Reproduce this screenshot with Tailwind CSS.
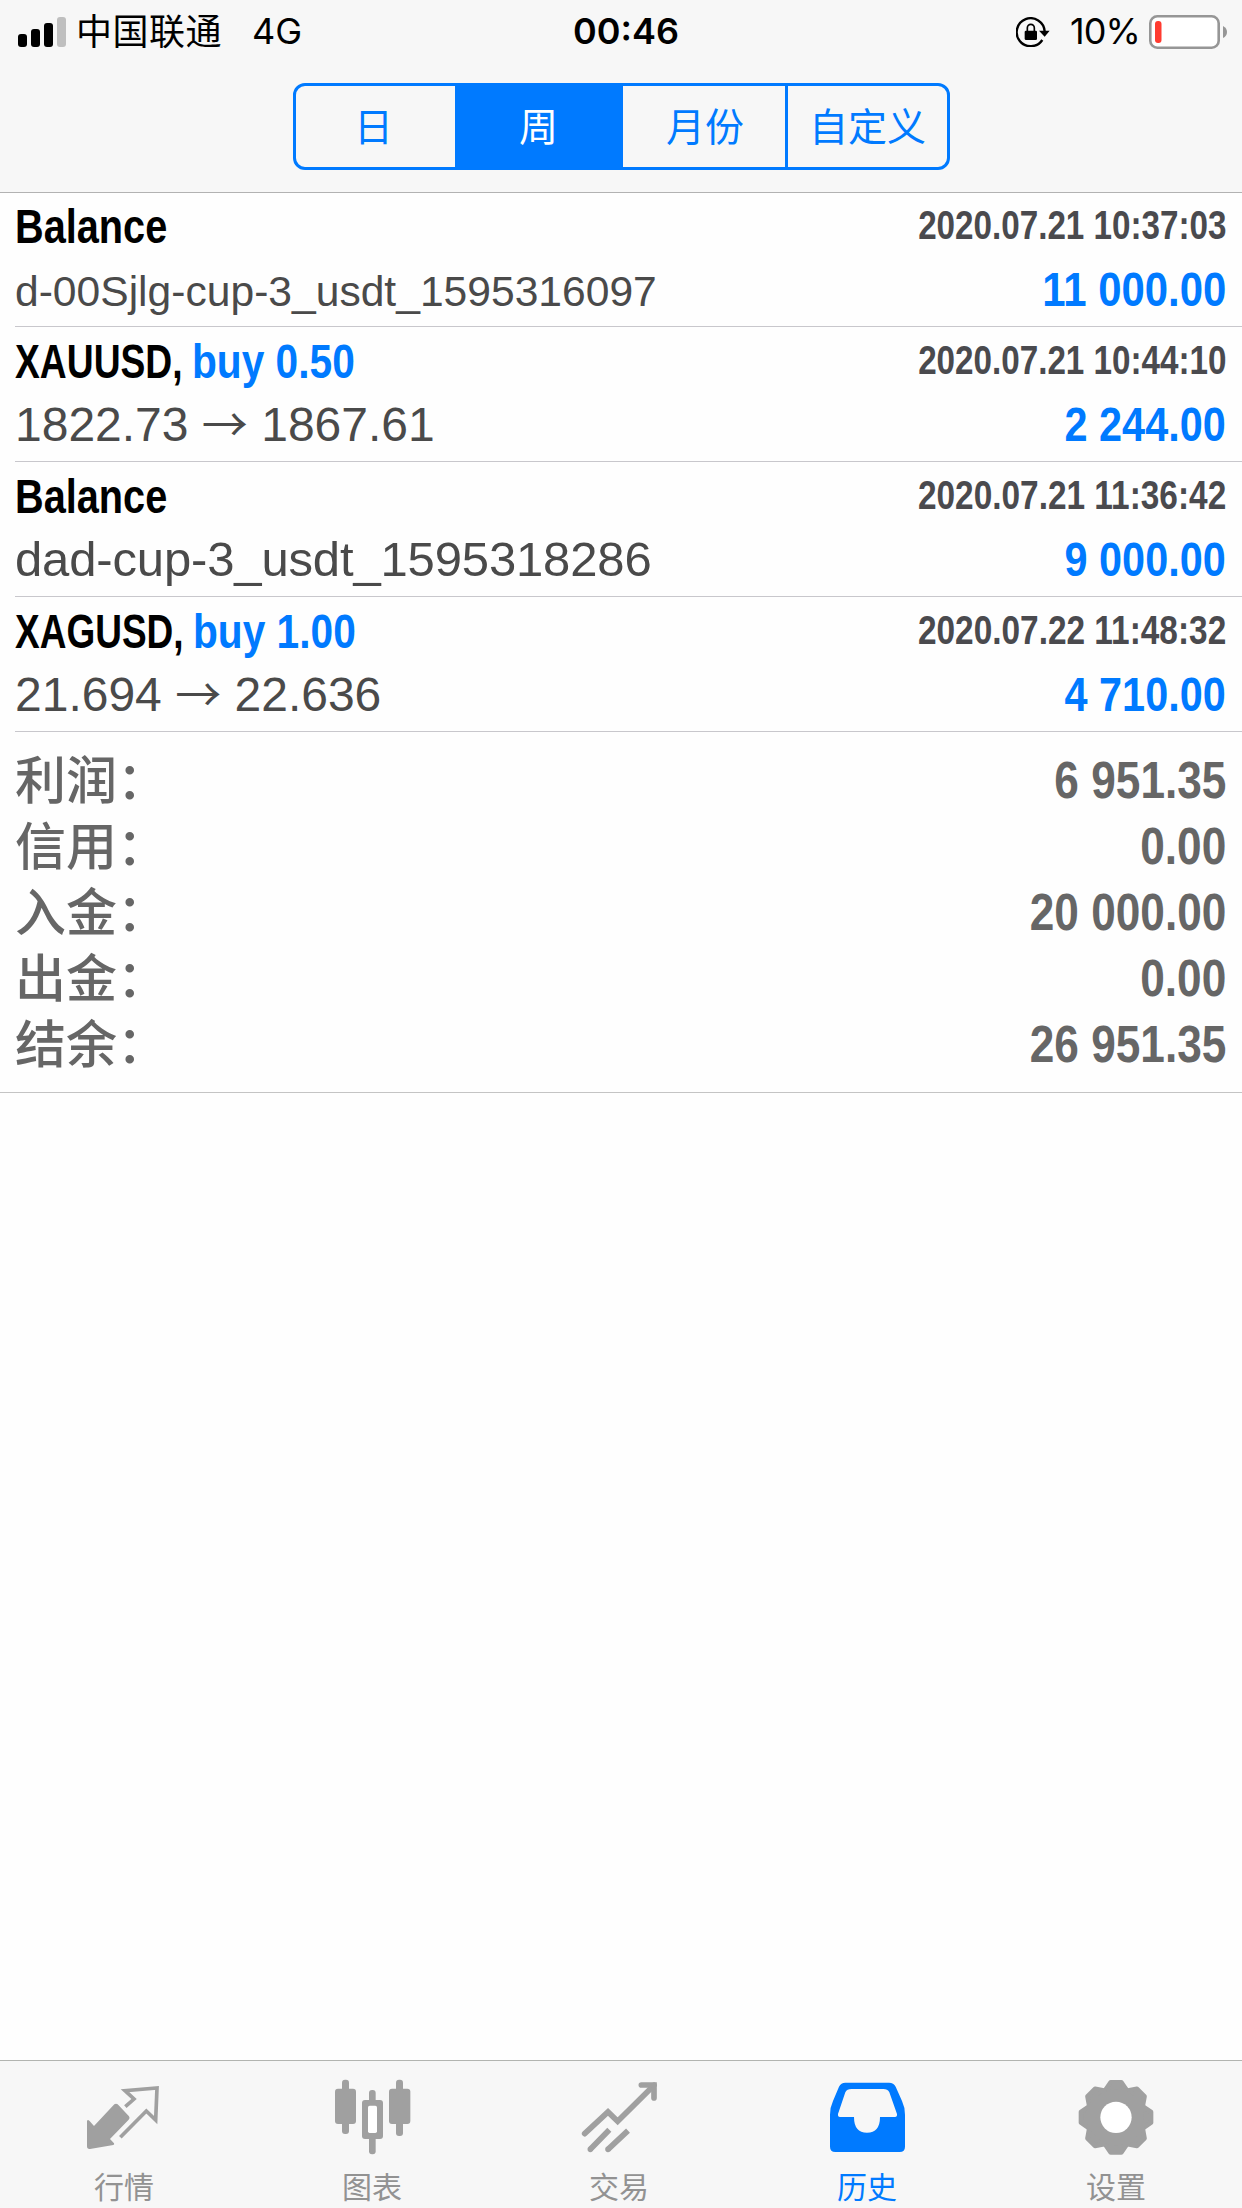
<!DOCTYPE html>
<html lang="zh-CN">
<head>
    <meta charset="UTF-8">
    <title>历史</title>
    <script src="https://cdn.jsdelivr.net/npm/@tailwindcss/browser@4"></script>
</head>
<body class="bg-[#fefefe] font-['Liberation_Sans','Noto_Sans_CJK_SC',sans-serif]">
    <div class="w-[1242px] h-[2208px] flex flex-col overflow-hidden">

        <!-- Header -->
        <header class="h-[193px] shrink-0 bg-[#f7f7f7] border-b border-[#b2b2b2]">
            <div class="h-[60px] grid grid-cols-3 items-center text-[36px] text-black whitespace-nowrap font-['Inter','Noto_Sans_CJK_SC',sans-serif]">
                <div class="flex items-center pl-[18px]">
                    <svg class="w-12 h-[30px]" viewBox="0 0 48 30">
                        <rect x="0" y="17" width="9" height="13" rx="3"/>
                        <rect x="13" y="12" width="9" height="18" rx="3"/>
                        <rect x="26" y="6" width="9" height="24" rx="3"/>
                        <rect x="39" y="0" width="9" height="30" rx="3" fill="#bfbfbf"/>
                    </svg>
                    <span class="ml-[10px] h-[60px] leading-[55px] tracking-[0.5px] font-['Noto_Sans_CJK_SC']">中国联通</span>
                    <span class="ml-[30px] h-[64px] leading-[62px]">4G</span>
                </div>
                <div class="text-center font-semibold h-[64px] leading-[62px] pl-[10px]">00:46</div>
                <div class="flex items-center justify-end pr-[15px]">
                    <svg class="w-[34px] h-[30px] mr-[20px]" viewBox="528 45 102 90">
                        <path d="M607 114 A42 42 0 1 1 614 88" fill="none" stroke="#000" stroke-width="7"/>
                        <path d="M597 86h32l-15 18z"/>
                        <rect x="554" y="86" width="37" height="28" rx="4"/>
                        <path d="M562 88v-10a10.500 11 0 0 1 21 0v10" fill="none" stroke="#000" stroke-width="5"/>
                    </svg>
                    <span class="h-[64px] leading-[62px] tracking-[-0.9px]">10%</span>
                    <svg class="w-[78px] h-[34px] ml-[9px]" viewBox="0 0 78 34">
                        <rect x="1.300" y="1.300" width="68.400" height="31.400" rx="7" fill="#fff" stroke="#969696" stroke-width="2.600"/>
                        <rect x="6" y="6" width="6.500" height="22" rx="3" fill="#ff3b30"/>
                        <path d="M74 11q4 2 4 6t-4 6z" fill="#969696"/>
                    </svg>
                </div>
            </div>

            <div class="mt-[23px] mx-auto w-[657px] h-[87px] flex border-3 border-[#007aff] rounded-xl text-[39px] leading-[76px] text-center text-[#007aff] font-['Noto_Sans_CJK_SC']">
                <div class="w-[159px] pr-[3px]">日</div>
                <div class="w-[168px] bg-[#007aff] text-white">周</div>
                <div class="w-[162px] pl-[3px]">月份</div>
                <div class="flex-1 border-l-3 border-[#007aff] pl-px">自定义</div>
            </div>
        </header>

        <!-- History list -->
        <ul class="-mt-px pl-[15px] text-[49px] whitespace-nowrap">
            <li class="h-[135px] pr-[16px] flex justify-between border-b border-[#c8c7cc]">
                <div>
                    <div class="h-[68px] leading-[68px] font-bold text-black"><span class="inline-block origin-left scale-x-[0.81]">Balance</span></div>
                    <div class="text-[42.6px] leading-[62px] text-[#4a4a4a]">d-00Sjlg-cup-3_usdt_1595316097</div>
                </div>
                <div class="flex flex-col items-end font-bold">
                    <div class="text-[40px] leading-[66px] text-[#4a4a4e] origin-right scale-x-[0.83]">2020.07.21 10:37:03</div>
                    <div class="leading-[62px] text-[#007aff] origin-right scale-x-[0.855]">11 000.00</div>
                </div>
            </li>
            <li class="h-[135px] pr-[16px] flex justify-between border-b border-[#c8c7cc]">
                <div>
                    <div class="h-[68px] leading-[68px] font-bold text-black flex">
                        <span class="w-[177px] origin-left scale-x-[0.76]">XAUUSD,</span>
                        <span class="origin-left scale-x-[0.83] text-[#007aff]">buy 0.50</span>
                    </div>
                    <div class="text-[48px] leading-[60px] text-[#4a4a4a]">1822.73 <span class="text-[46px] leading-none font-['Noto_Sans_CJK_SC']">→</span> 1867.61</div>
                </div>
                <div class="flex flex-col items-end font-bold">
                    <div class="text-[40px] leading-[66px] text-[#4a4a4e] origin-right scale-x-[0.83]">2020.07.21 10:44:10</div>
                    <div class="leading-[62px] text-[#007aff] origin-right scale-x-[0.845]">2 244.00</div>
                </div>
            </li>
            <li class="h-[135px] pr-[16px] flex justify-between border-b border-[#c8c7cc]">
                <div>
                    <div class="h-[68px] leading-[68px] font-bold text-black"><span class="inline-block origin-left scale-x-[0.81]">Balance</span></div>
                    <div class="leading-[58px] text-[#4a4a4a] tracking-[-0.15px]">dad-cup-3_usdt_1595318286</div>
                </div>
                <div class="flex flex-col items-end font-bold">
                    <div class="text-[40px] leading-[66px] text-[#4a4a4e] origin-right scale-x-[0.835]">2020.07.21 11:36:42</div>
                    <div class="leading-[62px] text-[#007aff] origin-right scale-x-[0.845]">9 000.00</div>
                </div>
            </li>
            <li class="h-[135px] pr-[16px] flex justify-between border-b border-[#c8c7cc]">
                <div>
                    <div class="h-[68px] leading-[68px] font-bold text-black flex">
                        <span class="w-[178px] origin-left scale-x-[0.755]">XAGUSD,</span>
                        <span class="origin-left scale-x-[0.83] text-[#007aff]">buy 1.00</span>
                    </div>
                    <div class="text-[48px] leading-[60px] text-[#4a4a4a]">21.694 <span class="text-[46px] leading-none font-['Noto_Sans_CJK_SC']">→</span> 22.636</div>
                </div>
                <div class="flex flex-col items-end font-bold">
                    <div class="text-[40px] leading-[66px] text-[#4a4a4e] origin-right scale-x-[0.835]">2020.07.22 11:48:32</div>
                    <div class="leading-[62px] text-[#007aff] origin-right scale-x-[0.845]">4 710.00</div>
                </div>
            </li>
        </ul>

        <!-- Totals -->
        <div class="pl-[15px] pr-[16px] py-[15px] border-b border-[#c4c4c4] text-[52px] leading-[66px] text-[#666666]">
            <div class="h-[66px] flex justify-between">
                <span class="font-medium text-[51px] leading-[61px] font-['Noto_Sans_CJK_SC']">利润：</span>
                <span class="font-bold origin-right scale-x-[0.85]">6 951.35</span>
            </div>
            <div class="h-[66px] flex justify-between">
                <span class="font-medium text-[51px] leading-[61px] font-['Noto_Sans_CJK_SC']">信用：</span>
                <span class="font-bold origin-right scale-x-[0.85]">0.00</span>
            </div>
            <div class="h-[66px] flex justify-between">
                <span class="font-medium text-[51px] leading-[61px] font-['Noto_Sans_CJK_SC']">入金：</span>
                <span class="font-bold origin-right scale-x-[0.85]">20 000.00</span>
            </div>
            <div class="h-[66px] flex justify-between">
                <span class="font-medium text-[51px] leading-[61px] font-['Noto_Sans_CJK_SC']">出金：</span>
                <span class="font-bold origin-right scale-x-[0.85]">0.00</span>
            </div>
            <div class="h-[66px] flex justify-between">
                <span class="font-medium text-[51px] leading-[61px] font-['Noto_Sans_CJK_SC']">结余：</span>
                <span class="font-bold origin-right scale-x-[0.85]">26 951.35</span>
            </div>
        </div>

        <!-- Tab bar -->
        <nav class="mt-auto h-[148px] shrink-0 grid grid-cols-[repeat(5,248px)] bg-[#f7f7f7] border-t border-[#b2b4b0] text-[30px] leading-[60px] text-[#929292] font-['Noto_Sans_CJK_SC']">
            <a class="flex flex-col items-center pt-[15px]">
                <svg class="size-20 shrink-0" viewBox="132 108 240 240" fill="#a0a0a0">
                    <path d="M223 193q5-4 10 0l34 36q4 5-1 10l-56 58 12 13q2 4-2 5l-70 12q-9 1-9-8v-76q2-6 7-1l14 16z"/>
                    <path d="M256 200l26-23-27-25 96-8-4 96-28-27-78 79" fill="none" stroke="#a0a0a0" stroke-width="11"/>
                </svg>
                <span class="-mt-px">行情</span>
            </a>
            <a class="flex flex-col items-center pt-[15px]">
                <svg class="size-20 shrink-0" viewBox="876 108 240 240" fill="#a0a0a0">
                    <rect x="906" y="119" width="21" height="163" rx="9"/>
                    <rect x="885" y="146" width="63" height="106" rx="9"/>
                    <rect x="1068" y="119" width="21" height="169" rx="9"/>
                    <rect x="1047" y="146" width="64" height="106" rx="9"/>
                    <rect x="987" y="150" width="20" height="193" rx="9"/>
                    <rect x="966" y="180" width="63" height="117" rx="9"/>
                    <rect x="984" y="197" width="27" height="82" rx="5" fill="#fff"/>
                </svg>
                <span class="-mt-px">图表</span>
            </a>
            <a class="flex flex-col items-center pt-[15px]">
                <svg class="size-20 shrink-0" viewBox="120 108 240 240" fill="none" stroke="#a0a0a0">
                    <path d="M134 281l70-65 29 28L342 136" stroke-width="17" stroke-linecap="round"/>
                    <path d="M304 135h38v39" stroke-width="17" stroke-linecap="round"/>
                    <path d="M208 269l-57 59M264 272l-60 56" stroke-width="17"/>
                    <path d="M151 328h0M204 328h0" stroke-width="17" stroke-linecap="round"/>
                </svg>
                <span class="-mt-px -ml-0.5">交易</span>
            </a>
            <a class="flex flex-col items-center pt-[15px] text-[#007aff]">
                <svg class="size-20 shrink-0" viewBox="864 108 240 240" fill="#007aff" fill-rule="evenodd">
                    <path d="M916 128h131q14 0 20 12l19 43q9 19 9 41v96q0 16-16 16H886q-16 0-16-16v-96q0-22 9-41l18-43q6-12 19-12zM934 147q-13 0-18 10l-22 65q-1 9 6 9h42q0 47 39 47t39-47h45q7 0 6-9l-23-65q-5-10-18-10z"/>
                </svg>
                <span class="-mt-px -ml-0.5">历史</span>
            </a>
            <a class="flex flex-col items-center pt-[15px]">
                <svg class="size-20 shrink-0" viewBox="230 108 240 240" fill="#a0a0a0">
                    <g stroke="#a0a0a0" stroke-width="14" stroke-linejoin="round">
                        <path id="tooth" d="M314 156l20-29h32l20 29z"/>
                        <use href="#tooth" transform="rotate(45 350 232)"/>
                        <use href="#tooth" transform="rotate(90 350 232)"/>
                        <use href="#tooth" transform="rotate(135 350 232)"/>
                        <use href="#tooth" transform="rotate(180 350 232)"/>
                        <use href="#tooth" transform="rotate(225 350 232)"/>
                        <use href="#tooth" transform="rotate(270 350 232)"/>
                        <use href="#tooth" transform="rotate(315 350 232)"/>
                    </g>
                    <circle cx="350" cy="232" r="84"/>
                    <circle cx="350" cy="232" r="47" fill="#fff"/>
                </svg>
                <span class="-mt-px">设置</span>
            </a>
        </nav>
    </div>
</body>
</html>
